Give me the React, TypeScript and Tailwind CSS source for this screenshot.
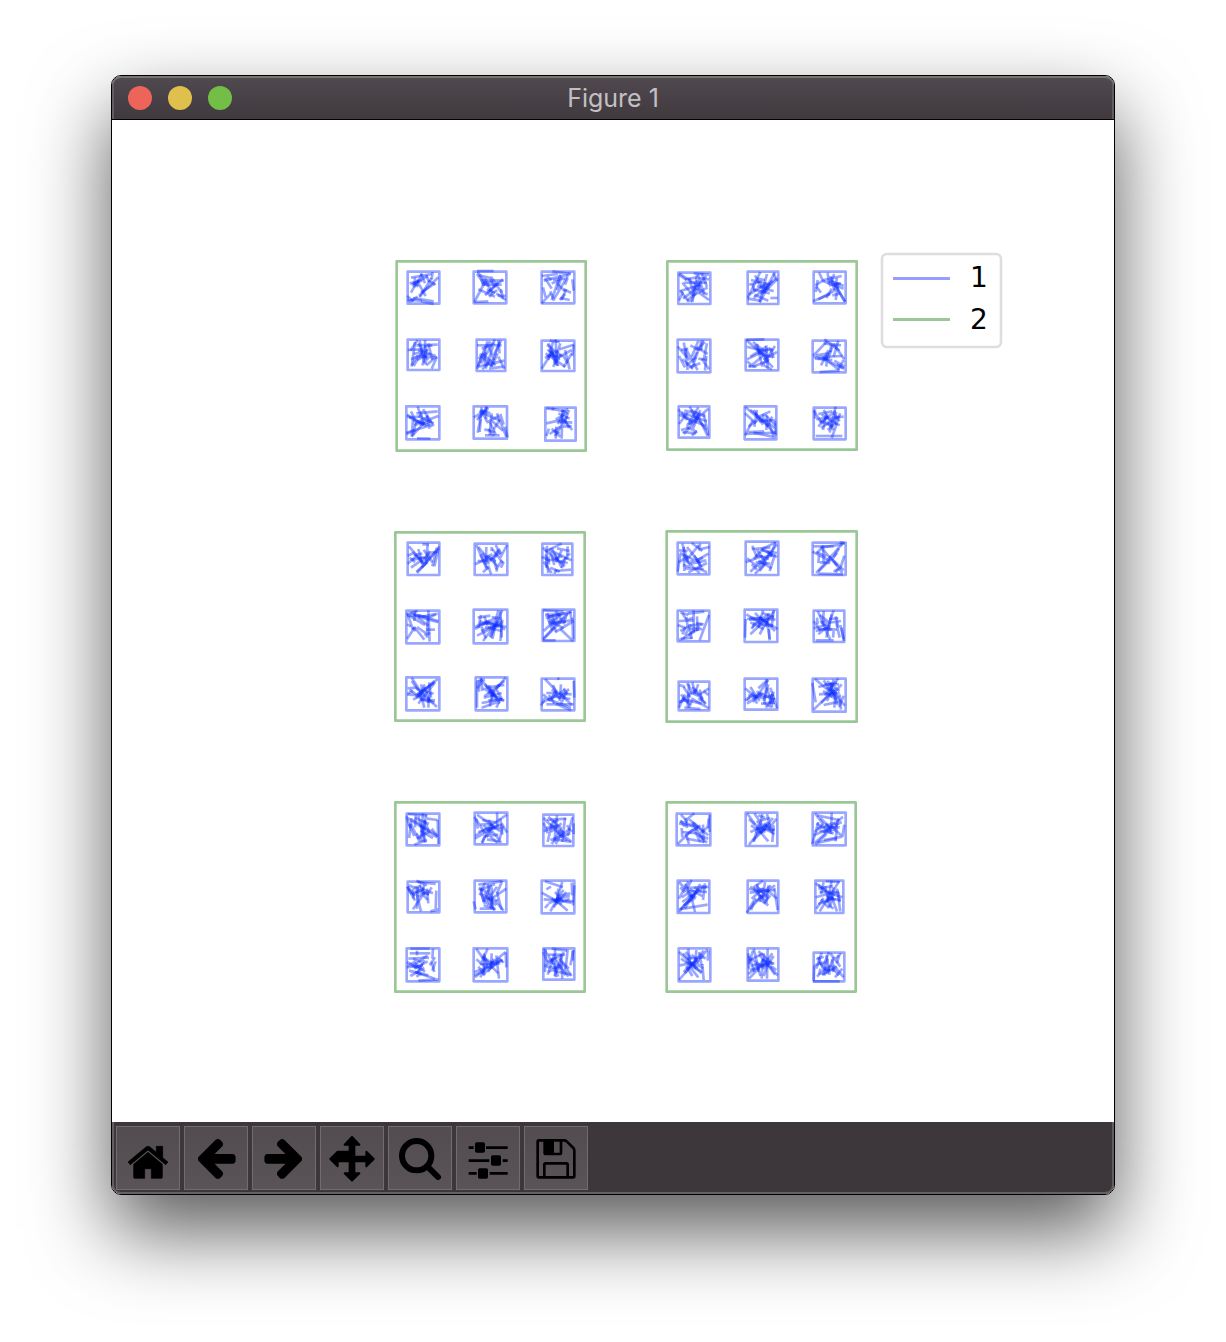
import type { ReactNode } from "react";

type Cell = { box: [number, number, number, number]; strokes: string };
type Panel = { x: number; y: number; frame: [number, number, number, number]; cells: Cell[] };

// Panel geometry is stored at three units per chart pixel.
// box / frame: left, top, right, bottom. strokes: "x1 y1 x2 y2" groups.
const panels: Panel[] = [
  {
    x: 273,
    y: 130,
    frame: [35, 34, 602, 602],
    cells: [
      { box: [68, 65, 163, 161], strokes: "78 83 140 72,80 105 128 78,96 92 122 138,74 100 112 92,110 72 94 108,143 66 140 88,160 82 102 138,150 100 108 128,100 88 78 128,108 70 120 100,130 92 152 104,84 98 100 110,140 84 104 142,66 138 86 154,66 150 110 152,84 144 146 154,108 154 146 162,72 156 98 140,90 82 88 112,124 76 132 96" },
      { box: [266, 65, 364, 160], strokes: "276 63 326 63,278 66 310 110,286 90 356 92,354 88 308 128,268 156 300 96,288 98 324 96,300 84 322 130,318 80 350 128,340 96 300 136,280 118 330 140,290 104 350 104,316 88 330 112,268 156 310 154,334 130 362 150,348 118 354 146,312 140 336 120,276 72 300 106,282 76 318 84,306 118 330 128,338 136 362 138" },
      { box: [470, 65, 568, 160], strokes: "470 78 518 72,476 92 548 74,502 64 558 72,480 84 500 116,526 74 500 150,554 68 508 146,504 90 540 86,470 160 498 130,474 112 482 142,500 100 524 92,530 80 516 120,562 88 566 122,536 118 558 128,544 118 530 150,526 144 554 150,496 124 508 152,516 100 540 124,548 84 540 104,486 80 500 90,524 150 540 132" },
      { box: [68, 269, 163, 360], strokes: "68 300 110 298,76 302 98 270,90 276 80 350,94 286 158 284,104 272 118 340,86 348 120 290,120 270 122 344,100 300 152 318,110 310 130 330,104 320 156 322,156 320 140 356,126 296 112 346,78 328 120 310,86 312 130 300,118 290 142 286,130 280 142 330,80 346 98 316,100 280 112 300,150 324 124 346,96 330 136 310" },
      { box: [275, 269, 361, 363], strokes: "276 286 350 286,308 274 278 350,330 268 288 340,340 270 344 310,324 290 302 356,344 276 318 350,290 310 332 346,284 312 320 350,280 350 358 332,292 358 320 328,300 300 300 348,348 272 326 316,340 320 358 356,312 290 326 330,280 326 304 308,290 296 330 280,312 356 356 350,316 274 300 300,338 310 320 350,276 356 290 320" },
      { box: [470, 272, 568, 363], strokes: "490 280 520 348,482 310 540 350,512 268 516 348,470 356 506 300,504 276 490 330,484 318 520 318,486 284 532 320,524 298 566 284,566 284 562 318,560 310 536 352,520 322 560 300,500 304 512 344,492 300 524 330,540 300 554 358,504 350 528 312,480 324 520 302,494 272 524 276,526 280 508 340,488 298 510 324,534 316 548 340" },
      { box: [64, 469, 163, 568], strokes: "66 498 108 520,78 484 90 510,98 470 108 500,94 490 158 484,114 478 146 528,84 508 80 560,86 512 142 528,64 548 130 528,88 526 160 498,100 498 146 520,72 502 104 500,66 494 124 528,108 484 114 528,80 560 118 516,104 524 140 514,96 565 136 566,64 552 92 540,84 556 92 520,90 520 130 500,126 496 134 536" },
      { box: [266, 469, 366, 566], strokes: "290 472 284 546,276 510 310 474,302 470 304 514,282 484 346 512,266 502 302 482,320 490 314 556,304 518 342 498,336 490 364 560,346 492 356 524,310 536 326 558,300 556 344 556,322 514 354 542,314 516 332 554,278 548 286 508,290 480 302 508,298 538 330 546,308 470 280 506,344 510 326 538,360 530 368 562,286 480 316 490" },
      { box: [481, 473, 572, 572], strokes: "484 475 508 478,532 478 530 566,520 490 554 506,540 482 518 522,484 520 536 508,520 514 562 518,528 500 562 540,484 558 492 536,500 536 526 560,510 558 530 526,530 484 550 478,552 480 536 524,512 508 548 488,526 522 548 500,494 552 526 530,500 476 546 486,540 510 552 534,514 530 512 566,534 530 560 528,508 542 524 550" },
    ],
  },
  {
    x: 545,
    y: 130,
    frame: [31, 34, 599, 599],
    cells: [
      { box: [64, 68, 160, 162], strokes: "66 70 124 108,84 88 120 82,110 70 156 74,134 70 150 110,68 124 130 104,76 98 108 136,120 76 106 156,78 146 118 116,96 84 110 130,122 72 142 134,148 78 108 122,82 98 150 98,70 122 96 156,126 128 156 150,110 136 152 112,90 152 112 132,66 74 88 90,124 84 156 88,108 110 152 134,100 156 130 104,66 152 78 126,120 90 130 120" },
      { box: [272, 65, 364, 162], strokes: "310 66 272 144,282 90 340 104,294 76 314 114,358 84 290 144,354 68 318 130,330 72 308 156,300 86 324 90,272 146 310 152,300 108 350 124,276 134 330 100,346 92 312 134,288 118 338 130,310 104 338 114,322 126 360 88,308 158 330 116,276 104 314 94,292 134 334 152,340 144 362 144,286 102 294 124,348 70 362 92" },
      { box: [470, 65, 566, 160], strokes: "486 68 500 96,500 94 560 116,520 78 532 120,512 68 516 104,554 78 500 90,532 72 520 100,526 90 564 156,478 110 492 128,476 106 500 90,534 104 564 154,468 154 520 132,516 106 552 100,538 98 560 108,540 84 532 120,508 144 524 116,526 136 550 130,482 90 476 126,544 100 536 150,514 92 546 102,484 148 536 120" },
      { box: [62, 269, 160, 367], strokes: "62 290 98 330,80 278 90 322,72 300 94 296,66 318 84 352,86 296 110 338,100 286 126 300,124 272 104 320,144 276 116 300,132 272 130 302,150 280 140 330,120 292 152 312,126 296 104 358,88 346 118 322,110 340 122 360,96 352 130 340,134 326 156 358,148 318 144 362,124 326 150 330,76 328 106 354,84 300 92 360,120 306 108 330,138 270 132 300" },
      { box: [266, 269, 364, 361], strokes: "268 270 336 332,268 270 322 268,288 276 330 310,270 290 316 302,300 282 316 350,270 328 340 294,354 288 318 344,276 352 318 318,328 286 332 356,286 350 336 332,302 308 348 322,280 320 328 290,320 324 348 352,360 306 320 328,316 300 350 300,274 348 298 350,270 334 282 344,300 296 326 320,292 286 328 320,340 294 350 324,320 346 344 358" },
      { box: [467, 272, 566, 367], strokes: "468 318 510 274,502 268 548 302,500 280 552 286,544 272 530 320,530 282 562 328,514 300 492 346,470 322 556 318,482 326 512 326,496 320 546 360,514 334 562 356,488 366 548 362,520 302 500 334,474 326 526 330,476 316 516 310,560 330 544 358,528 286 512 330,532 332 562 350,540 344 560 354,510 316 508 350,522 284 520 306" },
      { box: [65, 469, 157, 563], strokes: "64 478 90 510,82 482 122 490,98 470 118 510,124 472 90 528,154 476 98 524,66 494 146 528,120 492 152 558,130 480 108 536,80 552 122 508,74 486 106 520,88 530 120 546,94 524 130 490,76 546 116 550,66 522 92 488,110 490 148 540,140 490 154 556,72 540 96 534,102 480 144 500,80 490 150 514,104 556 120 544" },
      { box: [263, 469, 358, 568], strokes: "264 470 318 516,290 480 318 524,264 556 288 510,300 480 292 530,318 492 320 514,308 502 354 552,294 490 336 530,340 484 298 504,324 494 356 526,266 552 356 548,290 548 354 562,306 514 354 510,330 496 328 540,322 508 352 534,274 546 322 544,264 490 296 520,346 500 330 530,354 512 356 556,274 530 306 508,336 520 350 560,280 480 300 496" },
      { box: [470, 473, 566, 568], strokes: "470 482 492 516,484 492 526 484,500 480 528 526,478 508 514 502,490 520 536 482,536 470 518 548,508 492 498 540,520 504 560 500,530 490 548 514,476 558 556 558,494 494 548 526,488 512 530 530,540 520 524 564,510 514 530 540,484 530 512 498,538 486 532 520,492 534 548 498,550 490 536 524,474 478 474 506,512 540 536 518" },
    ],
  },
  {
    x: 273,
    y: 401,
    frame: [31, 34, 599, 599],
    cells: [
      { box: [68, 65, 163, 162], strokes: "72 76 110 122,112 70 132 70,128 70 124 120,68 128 98 102,100 84 112 130,78 140 112 116,96 156 152 92,90 100 116 128,80 116 124 110,128 124 94 152,156 80 142 136,162 76 148 136,130 96 158 92,120 128 134 98,100 110 120 110,134 90 110 128,86 102 112 98,116 86 142 124,74 110 90 124,110 140 160 82,68 104 90 94" },
      { box: [269, 68, 367, 162], strokes: "274 72 300 130,280 78 316 122,304 78 302 140,332 72 346 100,366 72 346 110,322 84 354 126,346 84 316 116,270 130 310 112,286 100 308 146,310 108 338 136,316 118 350 92,326 110 336 152,310 134 318 160,334 146 350 118,306 104 332 122,278 120 310 120,300 110 322 100,292 96 312 130,356 122 348 140,294 154 310 138,340 86 330 108,320 78 320 90" },
      { box: [472, 68, 562, 162], strokes: "474 80 506 110,480 92 530 68,470 108 494 118,482 100 490 156,508 96 530 140,500 80 516 118,486 74 484 140,488 120 532 106,510 110 540 136,490 106 492 130,530 88 512 124,548 76 546 116,500 90 560 118,516 82 554 90,526 126 544 110,504 116 548 126,514 144 508 158,476 122 500 156,512 150 558 146,542 108 530 142,524 152 496 140,494 82 508 132,546 104 556 98" },
      { box: [64, 269, 163, 367], strokes: "64 280 98 270,66 284 124 286,90 270 88 300,86 278 130 314,98 282 160 300,100 290 158 278,130 268 134 362,66 280 120 312,66 354 90 318,88 318 118 356,66 310 78 316,110 290 160 304,128 284 126 350,96 318 122 336,70 286 84 326,124 326 150 326,134 290 152 280,82 320 92 330,76 276 108 286,118 342 136 336" },
      { box: [266, 266, 367, 367], strokes: "278 290 316 284,270 318 332 292,340 268 318 350,346 270 350 350,352 268 332 306,276 344 350 308,294 360 344 294,288 330 336 312,284 302 364 318,282 310 328 304,320 288 350 292,298 286 308 314,270 324 314 300,300 318 350 330,288 282 280 320,352 296 346 360,300 300 342 318,332 312 322 354,360 326 334 308,314 348 340 300,290 318 302 352,310 320 352 302" },
      { box: [473, 266, 568, 360], strokes: "474 268 536 272,480 282 540 278,482 290 560 272,486 276 514 332,500 282 512 316,474 356 540 290,556 272 512 308,476 352 508 318,512 270 532 300,498 310 556 298,504 304 536 322,526 324 564 360,566 300 510 334,474 358 512 358,490 304 542 302,530 280 498 300,546 276 536 310,556 272 560 300,562 290 564 354,488 288 526 280,502 328 488 290,476 330 518 290" },
      { box: [64, 469, 163, 568], strokes: "80 470 112 520,68 502 96 500,92 530 158 474,100 524 148 480,96 502 156 558,106 514 118 560,66 520 110 524,80 480 100 508,116 490 134 542,132 484 138 530,150 484 100 548,104 536 150 538,118 498 98 522,68 518 84 510,108 490 120 536,74 506 110 534,110 508 146 518,96 520 146 486,84 536 112 522,136 516 128 546,132 530 130 560,110 536 148 544" },
      { box: [272, 469, 367, 568], strokes: "276 484 276 560,274 482 300 476,288 470 292 510,286 474 330 524,300 490 336 536,298 526 358 480,302 500 358 492,294 502 330 520,308 514 358 540,290 546 346 536,326 506 314 556,344 490 320 524,362 470 332 506,290 560 336 544,296 530 350 516,312 492 322 534,348 530 334 560,310 538 352 536,320 520 340 530,282 478 282 512,316 500 344 548,276 502 290 484,336 508 354 540" },
      { box: [470, 473, 568, 568], strokes: "480 474 518 514,518 470 522 476,472 546 516 518,484 516 516 516,490 540 540 506,488 534 558 560,504 492 520 530,528 490 524 540,524 516 560 552,566 480 568 530,500 506 540 528,520 534 552 504,536 502 548 520,484 550 566 550,512 548 558 568,468 554 480 530,492 522 508 548,510 510 500 536,544 514 528 548,506 526 556 534,530 518 560 520,474 520 492 536" },
    ],
  },
  {
    x: 545,
    y: 401,
    frame: [29, 31, 599, 602],
    cells: [
      { box: [62, 65, 157, 160], strokes: "68 96 110 116,76 68 92 122,104 66 136 90,126 72 90 116,80 78 82 150,124 86 158 78,90 78 130 128,64 124 94 106,100 122 138 110,112 104 130 136,84 142 140 144,84 116 128 156,102 128 148 118,94 154 150 126,120 140 150 154,70 100 62 152,66 88 92 90,118 120 154 98,80 102 100 130,130 68 126 82,122 118 134 140,78 132 100 138" },
      { box: [266, 62, 364, 162], strokes: "286 74 300 110,284 84 340 80,300 86 324 122,266 124 318 104,356 64 340 106,360 70 304 140,312 84 360 108,324 78 290 114,280 152 322 112,340 94 318 132,354 100 338 150,294 158 330 124,316 88 360 96,270 112 300 136,304 118 344 142,330 92 346 104,296 124 340 128,284 130 300 146,356 64 324 80,320 108 348 104,296 102 336 114,308 150 322 130" },
      { box: [467, 65, 566, 162], strokes: "470 76 530 76,466 92 520 120,478 156 560 64,490 80 556 70,498 78 500 126,546 82 524 118,478 94 508 106,488 124 520 126,516 106 560 148,480 96 500 74,530 120 556 156,562 104 552 136,530 152 554 138,496 84 540 134,484 152 520 116,484 158 558 160,486 104 484 126,544 144 536 154,548 64 564 68,540 96 530 108" },
      { box: [62, 269, 157, 361], strokes: "76 276 88 296,70 274 94 282,92 278 142 272,110 268 110 334,66 300 110 298,62 312 84 320,94 314 136 310,156 282 128 358,88 288 92 320,70 330 104 312,80 350 122 326,72 354 106 350,98 318 104 354,120 286 122 330,92 296 108 290,84 342 98 320,102 324 130 318,76 340 86 318,66 356 84 350,118 306 140 310,112 326 136 324,94 344 112 328" },
      { box: [263, 266, 361, 363], strokes: "264 350 266 294,270 294 316 292,268 280 318 310,318 268 304 320,278 290 356 296,294 276 320 302,298 308 350 286,280 340 322 300,330 300 338 354,350 270 344 318,308 286 354 330,320 290 334 280,336 276 326 318,352 268 330 304,280 304 320 324,308 340 330 298,314 296 362 324,294 304 284 324,276 296 326 298,304 310 348 314,338 358 336 324,286 320 310 292,316 276 350 288" },
      { box: [470, 269, 562, 363], strokes: "482 270 502 316,488 282 514 302,500 270 498 310,530 268 516 308,524 280 508 350,470 322 508 312,476 330 518 320,502 320 520 356,512 306 552 300,536 286 544 320,484 324 540 326,490 300 516 330,484 340 520 310,480 290 482 310,550 312 560 354,530 330 528 350,538 306 548 350,476 358 530 358,554 320 560 360,500 298 524 328,470 300 490 330,516 294 544 292" },
      { box: [65, 482, 157, 568], strokes: "68 492 84 498,90 486 104 512,106 484 114 520,96 488 92 560,106 498 146 550,80 498 100 530,124 490 112 518,68 542 96 536,66 546 120 504,116 508 138 534,156 502 128 520,76 530 100 552,92 538 134 548,82 560 130 564,96 560 108 530,110 536 156 562,98 514 124 524,128 506 136 540,72 520 94 546,140 510 154 522,124 532 146 546,66 560 84 520" },
      { box: [263, 473, 361, 566], strokes: "330 474 322 550,264 502 300 532,280 498 308 540,334 476 288 544,270 548 320 516,274 522 312 530,270 540 290 514,300 510 318 534,304 502 330 478,330 500 346 560,340 500 360 562,318 530 352 522,334 490 320 540,312 548 352 544,350 512 336 548,326 560 354 530,284 532 314 514,340 520 350 550,308 518 352 536,324 548 342 558,290 520 300 548,264 538 280 526" },
      { box: [467, 473, 566, 572], strokes: "470 566 536 502,466 486 476 544,474 474 528 520,484 498 540 484,500 478 532 526,544 472 504 524,510 480 548 510,516 494 546 530,486 520 548 516,520 486 542 552,502 490 546 490,526 514 564 554,536 508 532 560,500 552 548 542,554 490 520 528,498 510 540 536,492 546 520 518,530 476 520 510,560 524 546 558,508 500 530 512,524 510 510 540,548 520 552 566" },
    ],
  },
  {
    x: 273,
    y: 672,
    frame: [31, 31, 599, 599],
    cells: [
      { box: [65, 65, 163, 160], strokes: "62 74 120 112,68 66 126 70,114 64 108 140,124 68 110 132,80 78 72 138,72 96 88 132,84 84 156 130,100 72 122 152,92 70 90 106,126 80 158 84,158 84 160 156,104 100 156 136,118 84 134 124,88 158 126 144,94 124 112 148,120 86 116 150,66 80 76 108,106 116 144 138,140 110 158 134,96 140 130 120,78 96 104 150,90 78 132 96" },
      { box: [269, 62, 367, 157], strokes: "268 74 300 124,276 68 346 118,270 132 366 68,270 140 340 98,310 84 330 112,336 62 338 104,290 152 322 96,280 120 350 98,316 112 344 144,300 132 340 128,308 110 350 108,306 142 350 150,292 84 336 92,346 80 352 128,354 102 342 150,296 100 320 126,350 94 366 122,292 154 300 130,324 104 304 136,274 80 278 110,316 134 338 152,286 98 320 96" },
      { box: [475, 68, 565, 162], strokes: "476 78 528 132,516 70 508 150,486 84 544 80,504 86 530 110,482 108 520 100,562 76 548 132,566 94 566 126,488 150 500 96,496 94 538 124,514 116 558 148,540 78 532 150,530 94 498 120,510 142 560 150,534 116 512 156,476 92 488 124,496 144 556 124,554 110 530 130,520 84 500 92,490 74 512 94,524 128 546 146,546 100 560 120,476 118 510 104,500 156 530 110" },
      { box: [68, 269, 163, 361], strokes: "68 284 90 312,94 266 126 280,98 270 152 276,84 290 86 320,98 284 96 350,104 278 120 308,80 308 118 288,120 300 84 352,94 300 108 358,126 290 130 334,90 298 132 306,112 292 144 304,72 280 112 298,140 286 126 310,100 314 124 300,154 296 152 350,136 358 160 352,118 278 112 300,70 290 90 326,116 310 128 324,88 286 108 284,66 284 80 306" },
      { box: [269, 266, 364, 361], strokes: "266 328 272 352,280 278 350 268,286 294 330 276,286 284 296 330,300 300 320 350,318 278 296 330,352 266 336 304,364 290 320 320,310 304 328 356,320 286 322 346,296 340 332 352,336 300 350 354,310 340 294 306,284 350 328 350,336 284 310 322,306 320 340 326,280 290 310 300,322 312 318 346,300 272 284 310,330 326 356 356,288 304 300 336,302 312 334 340,308 276 314 310" },
      { box: [470, 266, 568, 364], strokes: "480 268 534 286,484 292 498 284,470 302 520 330,532 270 514 328,476 322 566 328,520 290 514 338,518 330 548 356,496 358 520 316,536 294 508 330,480 348 490 336,524 312 556 304,514 322 554 312,490 334 528 320,520 326 560 332,500 320 530 336,560 272 562 310,544 300 522 326,526 316 506 346,554 320 540 326,568 280 564 340,510 300 536 330" },
      { box: [65, 469, 163, 568], strokes: "76 470 134 470,74 484 136 484,96 476 96 490,144 470 142 500,70 500 112 498,66 510 106 532,80 524 128 490,90 514 120 540,86 526 114 520,150 496 134 520,152 508 142 536,76 552 118 528,90 540 150 560,100 566 160 562,72 536 130 550,118 504 96 546,68 522 92 508,112 496 132 498,140 510 148 540,94 554 110 544,64 526 98 522,84 500 110 510,88 530 128 508" },
      { box: [266, 469, 367, 568], strokes: "274 470 300 508,308 470 290 510,270 556 362 480,296 484 308 528,290 494 330 518,320 484 318 530,334 490 342 560,268 540 314 524,284 516 346 514,292 548 350 502,268 550 300 536,316 512 354 506,300 500 320 524,306 516 286 556,326 500 310 540,362 482 364 526,280 524 300 550,314 530 342 508,298 490 296 540,274 502 300 524,320 524 340 544,340 498 356 512" },
      { box: [475, 469, 568, 563], strokes: "476 470 506 518,482 472 480 540,500 470 546 476,490 488 540 488,510 470 512 556,486 510 530 490,536 480 508 552,514 504 542 550,500 498 520 554,478 524 514 496,522 500 552 530,548 472 542 530,566 474 556 520,504 536 558 548,484 524 526 530,530 510 560 552,528 486 532 560,490 540 530 518,516 516 530 530,508 486 488 548,562 476 564 506,474 480 488 510,536 530 550 554" },
    ],
  },
  {
    x: 545,
    y: 672,
    frame: [29, 31, 596, 599],
    cells: [
      { box: [59, 65, 160, 160], strokes: "112 64 90 82,72 68 92 90,70 88 112 102,66 94 124 106,86 78 90 108,96 82 154 130,106 90 120 116,62 156 108 112,76 120 120 124,88 130 96 156,74 108 76 136,110 110 130 150,158 68 152 106,156 80 158 120,116 106 142 152,88 140 142 150,130 124 154 104,126 130 154 140,110 92 140 122,70 86 84 104,138 98 140 144,84 130 130 100,120 124 150 152" },
      { box: [266, 62, 361, 162], strokes: "270 64 314 124,292 64 320 106,316 66 306 114,330 66 340 108,276 158 332 90,288 146 340 94,280 120 330 100,300 86 324 122,298 108 354 114,348 78 312 122,358 80 336 110,310 120 334 148,320 94 352 128,350 100 346 150,282 100 316 124,322 110 348 122,304 98 290 150,276 82 294 98,340 78 310 86,350 116 326 98,296 124 326 112,304 70 324 78" },
      { box: [467, 62, 566, 160], strokes: "474 64 500 98,466 156 484 90,490 78 520 108,524 62 522 126,558 74 500 122,478 94 520 120,482 110 534 92,470 130 532 104,546 80 530 118,472 154 520 112,482 152 540 140,520 100 552 130,500 106 548 106,562 98 556 134,488 116 530 124,540 94 536 148,476 158 508 126,480 70 546 84,500 144 556 134,506 94 524 118,474 120 498 96,534 100 554 90" },
      { box: [62, 266, 157, 363], strokes: "66 270 108 318,94 268 66 320,104 264 90 290,66 360 110 306,70 352 140 280,84 276 96 300,90 288 150 284,92 296 150 300,130 276 106 320,144 274 138 324,76 330 118 300,80 340 114 318,66 352 152 338,100 300 114 360,124 290 96 330,98 292 136 312,74 316 98 300,70 286 84 302,112 286 134 300,84 350 100 320,154 284 132 290,92 310 118 316" },
      { box: [272, 266, 364, 363], strokes: "318 266 290 286,280 284 318 302,300 276 310 330,324 270 318 316,268 362 316 310,278 302 354 294,290 290 320 324,334 280 328 334,354 280 312 314,352 288 362 354,284 320 320 288,294 328 334 306,310 324 334 340,330 294 360 320,306 290 336 298,276 350 296 318,320 334 340 310,276 290 304 298,342 280 322 300,308 308 326 328,282 354 292 330,300 284 334 320" },
      { box: [475, 266, 559, 363], strokes: "476 274 520 306,506 268 548 270,524 266 516 308,546 268 508 330,484 290 528 282,488 300 546 300,476 316 520 304,504 282 518 340,488 358 524 300,530 286 520 346,514 302 556 316,510 320 552 324,540 290 550 358,492 322 516 348,524 314 540 358,484 336 530 318,500 270 492 306,538 300 508 332,514 340 530 350,484 278 506 298,544 300 548 330,508 310 536 324,478 350 500 318" },
      { box: [65, 469, 160, 568], strokes: "66 480 134 544,94 470 98 512,78 484 118 530,118 474 114 520,152 472 104 528,66 564 118 504,140 476 84 544,90 500 140 496,68 520 112 512,80 540 104 512,86 508 124 526,126 480 134 520,154 476 152 506,104 488 126 512,110 526 136 540,136 516 140 564,88 522 106 552,72 500 104 522,98 524 124 556,130 486 146 500,86 480 104 500,120 498 90 534,120 514 138 530" },
      { box: [272, 469, 364, 566], strokes: "290 470 310 552,274 484 276 530,276 506 318 484,304 478 348 516,332 470 330 560,282 500 324 530,346 484 318 524,306 488 362 550,276 560 320 514,278 534 330 518,318 500 314 560,350 492 332 520,276 492 292 540,284 520 352 514,320 484 328 526,334 520 354 548,288 476 276 516,300 534 320 500,294 512 306 540,314 506 344 512,336 508 320 552,274 546 296 530,342 522 358 534" },
      { box: [470, 482, 562, 568], strokes: "494 482 478 530,516 480 500 520,520 484 550 524,508 490 518 548,468 568 548 568,470 566 472 520,474 520 506 510,484 508 510 536,530 496 510 546,526 502 530 540,546 490 540 514,556 530 534 556,494 548 540 524,500 534 532 534,478 502 500 494,530 520 560 556,490 530 486 548,480 554 510 524,512 500 498 550,520 520 546 550,552 484 536 500,484 494 498 530,502 550 518 520" },
    ],
  },
];

function Scribble({ cell }: { cell: Cell }) {
  const [l, t, r, b] = cell.box;
  return (
    <g>
      <rect x={l} y={t} width={r - l} height={b - t} />
      {cell.strokes.split(",").map((s, i) => {
        const [x1, y1, x2, y2] = s.split(" ").map(Number);
        return <line key={i} x1={x1} y1={y1} x2={x2} y2={y2} />;
      })}
    </g>
  );
}

function Figure() {
  return (
    <svg viewBox="0 0 1002 1002" className="block h-auto w-full bg-white" role="img" aria-label="Figure 1 plot">
      {panels.map((p, i) => (
        <g key={i} transform={`translate(${p.x} ${p.y}) scale(${1 / 3})`} fill="none" strokeWidth="8" strokeLinejoin="round">
          <rect
            x={p.frame[0]}
            y={p.frame[1]}
            width={p.frame[2] - p.frame[0]}
            height={p.frame[3] - p.frame[1]}
            stroke="#9bc796"
          />
          <g stroke="#0f2dff" strokeOpacity="0.42">
            {p.cells.map((c, j) => (
              <Scribble key={j} cell={c} />
            ))}
          </g>
        </g>
      ))}
      <rect x="770" y="134" width="119" height="93" rx="5" fill="#fff" stroke="#dedede" strokeWidth="2.6" />
      <line x1="781" x2="838" y1="158.500" y2="158.500" stroke="#989dfb" strokeWidth="2.8" />
      <line x1="781" x2="838" y1="199.500" y2="199.500" stroke="#9bc796" strokeWidth="2.8" />
      <g fontFamily='"DejaVu Sans", sans-serif' fontSize="28" fill="#000">
        <text x="858" y="167">1</text>
        <text x="858" y="209">2</text>
      </g>
    </svg>
  );
}

const arrow =
  "M1664 896v128q0 53-32.5 90.5t-84.5 37.5h-704l293 294q38 36 38 90t-38 90l-75 76q-37 37-90 37-52 0-91-37l-651-652q-37-37-37-90 0-52 37-91l651-650q38-38 91-38 52 0 90 38l75 74q38 38 38 91t-38 91l-293 293h704q52 0 84.5 37.5t32.5 90.5z";

const tools: { label: string; icon: ReactNode }[] = [
  {
    label: "Home",
    icon: (
      <g strokeLinejoin="round" stroke="#000" strokeWidth="2">
        <path d="M96 61Q92 61 89 64L36 108L43 116L96 72L149 116L156 108L140 95V61H121V79L103 64Q100 61 96 61Z" />
        <path d="M96 79L53 115V154Q53 157 56 157H86V128H106V157H136Q139 157 139 154V115Z" />
      </g>
    ),
  },
  { label: "Back", icon: <path d={arrow} transform="translate(27 25) scale(.0768)" /> },
  { label: "Forward", icon: <path d={arrow} transform="translate(165 25) scale(-.0768 .0768)" /> },
  {
    label: "Pan",
    icon: (
      <path
        stroke="#000"
        strokeWidth="6"
        strokeLinejoin="round"
        d="M96 33L118 56H103V92H139V77L161 99L139 121V106H103V142H118L96 164L74 142H89V106H53V121L31 99L53 77H89V56H74Z"
      />
    ),
  },
  {
    label: "Zoom",
    icon: (
      <g fill="none" stroke="#000" strokeWidth="18">
        <circle cx="86" cy="89" r="44" />
        <path d="M118 121L150 153" strokeLinecap="round" />
      </g>
    ),
  },
  {
    label: "Configure subplots",
    icon: (
      <g>
        <path d="M38 61h15v8h-15zM90 61h65v8H90zM38 100h62v8H38zM140 100h15v8h-15zM38 138h24v8H38zM101 138h54v8h-54z" />
        <rect x="57" y="49" width="30" height="31" rx="5" />
        <rect x="105" y="88" width="30" height="31" rx="5" />
        <rect x="66" y="127" width="30" height="31" rx="5" />
      </g>
    ),
  },
  {
    label: "Save",
    icon: (
      <g fill="none" stroke="#000" strokeWidth="8" strokeLinejoin="round">
        <path d="M45 43H121Q125 43 128 46L148 66Q151 69 151 74V150Q151 154 147 154H45Q41 154 41 150V47Q41 43 45 43Z" />
        <path d="M62 43V80Q62 84 66 84H107Q111 84 111 80V43" />
        <path d="M62 43H90V84H62Z" fill="#000" stroke="none" />
        <path d="M61 154V116Q61 112 65 112H127Q131 112 131 116V154" />
      </g>
    ),
  },
];

export default function App() {
  return (
    <main className="bg-white px-[111px] pt-[75px] pb-[147px]">
      <div className="overflow-hidden rounded-[10px] border border-black shadow-[0_36px_80px_rgba(0,0,0,0.65)]">
        <header className="grid h-11 grid-cols-[1fr_auto_1fr] items-center border-b border-black bg-linear-to-b from-[#504a50] to-[#403a3f] px-4 shadow-[inset_0_2px_0_#777476,inset_2px_0_0_#625d61,inset_-2px_0_0_#625d61] rounded-t-[9px]">
          <div className="flex gap-4">
            <button aria-label="Close" className="size-6 rounded-full bg-[#ed655a]" />
            <button aria-label="Minimize" className="size-6 rounded-full bg-[#e0c04c]" />
            <button aria-label="Maximize" className="size-6 rounded-full bg-[#72be47]" />
          </div>
          <h1 className="font-[Inter,sans-serif] text-[25px] leading-8 text-[#c4bfc3]">Figure 1</h1>
        </header>
        <Figure />
        <nav
          aria-label="Figure tools"
          className="flex gap-1 rounded-b-[9px] bg-[#3d373c] p-1 shadow-[inset_0_-2px_0_#656164,inset_2px_0_0_#625d61,inset_-2px_0_0_#625d61]"
        >
          {tools.map((t) => (
            <button
              key={t.label}
              aria-label={t.label}
              className="size-16 bg-linear-to-b from-[#524c51] to-[#5a5459] shadow-[inset_0_0_0_1px_#716c70]"
            >
              <svg viewBox="0 0 192 192" className="size-16" aria-hidden="true">
                {t.icon}
              </svg>
            </button>
          ))}
        </nav>
      </div>
    </main>
  );
}
